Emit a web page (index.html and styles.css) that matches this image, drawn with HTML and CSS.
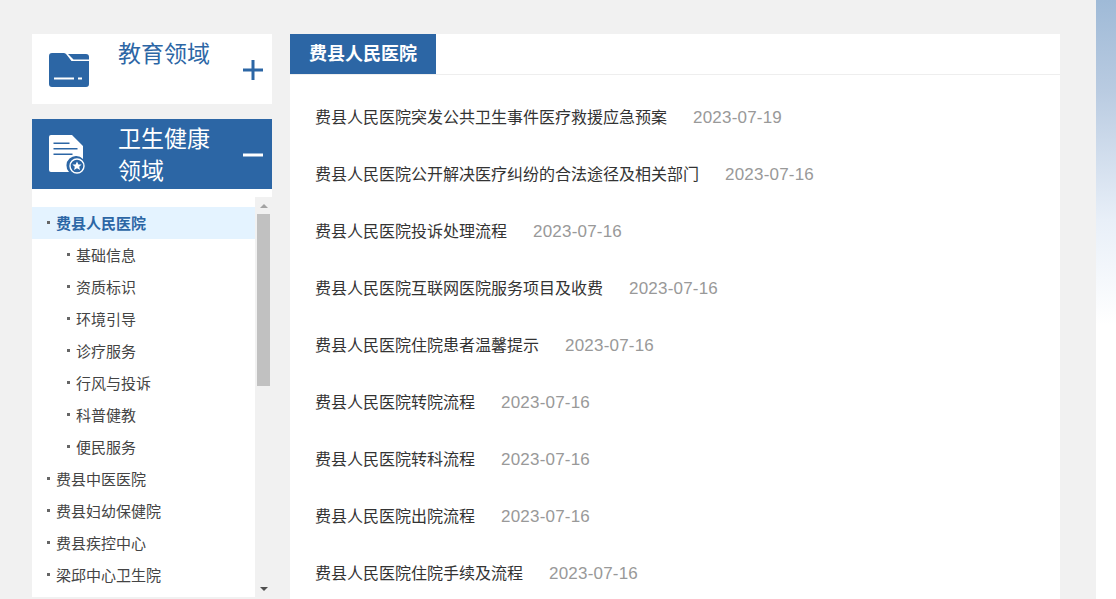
FILE: index.html
```html
<!DOCTYPE html>
<html lang="zh">
<head>
<meta charset="utf-8">
<title>费县人民医院</title>
<link rel="stylesheet" href="styles.css">
</head>
<body>
<div class="page">
  <div class="content">
    <aside class="side">
      <div class="domain">
        <svg class="domain-icon" width="40" height="34" viewBox="0 0 40 34"><path fill="#2c66a5" d="M3 0h12q1.500 0 2.500 1.500l5 6.500H40v23q0 3-3 3H3q-3 0-3-3V3q0-3 3-3z"/><path fill="#2c66a5" d="M19 1h18q3 0 3 3v2.500H24.500z"/><path fill="#fff" d="M5 24.500h20v2H5zM29 24.500h4v2h-4z"/></svg>
        <div class="domain-name">教育领域</div>
        <div class="toggle">
          <svg width="20" height="20" viewBox="0 0 20 20"><path fill="#2c66a5" d="M0 8.500h20v3H0zM8.500 0h3v20h-3z"/></svg>
        </div>
      </div>
      <div class="domain domain-on">
        <svg class="domain-icon" width="36" height="39" viewBox="0 0 36 39"><path fill="#fff" d="M2 0h21l11 11v13a9.500 9.500 0 0 0-14 13H2q-2 0-2-2V2q0-2 2-2z"/><path fill="#2c66a5" d="M4.500 7.500h16v1.500h-16zM4.500 13h24v1.500h-24zM4.500 18.500h19v1.500h-19z"/><circle cx="28" cy="31" r="7" fill="none" stroke="#fff" stroke-width="1.400"/><path fill="#fff" d="M28 26.500l1.400 3h3.200l-2.400 2.200.8 3.200-3-1.700-3 1.700.8-3.200-2.400-2.200h3.200z"/></svg>
        <div class="domain-name">卫生健康领域</div>
        <div class="toggle">
          <svg width="20" height="20" viewBox="0 0 20 20"><path fill="#fff" d="M0 8.500h20v3H0z"/></svg>
        </div>
      </div>
      <div class="tree-wrap">
        <ul class="tree">
          <li class="on">费县人民医院</li>
          <li class="sub">基础信息</li>
          <li class="sub">资质标识</li>
          <li class="sub">环境引导</li>
          <li class="sub">诊疗服务</li>
          <li class="sub">行风与投诉</li>
          <li class="sub">科普健教</li>
          <li class="sub">便民服务</li>
          <li>费县中医医院</li>
          <li>费县妇幼保健院</li>
          <li>费县疾控中心</li>
          <li>梁邱中心卫生院</li>
        </ul>
        <div class="bar">
          <span class="arrow-up"></span>
          <span class="thumb"></span>
          <span class="arrow-down"></span>
        </div>
      </div>
    </aside>
    <main class="main">
      <div class="tab-row"><h2 class="tab">费县人民医院</h2></div>
      <ul class="news">
        <li><a>费县人民医院突发公共卫生事件医疗救援应急预案</a><time>2023-07-19</time></li>
        <li><a>费县人民医院公开解决医疗纠纷的合法途径及相关部门</a><time>2023-07-16</time></li>
        <li><a>费县人民医院投诉处理流程</a><time>2023-07-16</time></li>
        <li><a>费县人民医院互联网医院服务项目及收费</a><time>2023-07-16</time></li>
        <li><a>费县人民医院住院患者温馨提示</a><time>2023-07-16</time></li>
        <li><a>费县人民医院转院流程</a><time>2023-07-16</time></li>
        <li><a>费县人民医院转科流程</a><time>2023-07-16</time></li>
        <li><a>费县人民医院出院流程</a><time>2023-07-16</time></li>
        <li><a>费县人民医院住院手续及流程</a><time>2023-07-16</time></li>
      </ul>
    </main>
  </div>
  <div class="strip"></div>
</div>
</body>
</html>
```

FILE: styles.css
```css
* { box-sizing: border-box; }
html, body { margin: 0; height: 599px; overflow: hidden; }
body {
  background: #f1f1f1;
  font-family: "Liberation Sans", "Noto Sans CJK SC", sans-serif;
  color: #333;
}
ul { list-style: none; margin: 0; padding: 0; }
.page { display: flex; height: 599px; overflow: hidden; }
.content {
  width: 1096px;
  padding: 34px 36px 0 32px;
  display: flex;
  gap: 18px;
  align-items: flex-start;
}
.strip {
  flex: 1;
  height: 100%;
  background: linear-gradient(#9fbad7 0, #b9cbe1 90px, #e8eff8 220px, #fff 325px);
}
.side { width: 240px; flex: none; }
.domain {
  height: 70px;
  background: #fff;
  display: flex;
  margin-bottom: 15px;
  color: #2c66a5;
}
.domain-icon { flex: none; margin: 19px 0 0 17px; }
.domain-name {
  width: 96px;
  margin: 4px 0 0 29px;
  font-size: 23px;
  line-height: 32px;
}
.toggle { margin: 26px 0 0 29px; line-height: 0; }
.domain-on { background: #2c66a5; color: #fff; margin-bottom: 0; }
.domain-on .domain-icon { margin: 16px 0 0 17px; }
.domain-on .domain-name { margin-left: 33px; }
.tree-wrap {
  height: 408px;
  padding-top: 8px;
  background: #fff;
  display: flex;
  overflow: hidden;
}
.tree { width: 223px; flex: none; padding-top: 10px; }
.tree li {
  height: 32px;
  line-height: 34px;
  font-size: 15px;
  padding-left: 24px;
  position: relative;
  color: #444;
}
.tree li::before {
  content: "";
  position: absolute;
  left: 15px;
  top: 14px;
  width: 3px;
  height: 3px;
  background: #666;
}
.tree .sub { padding-left: 44px; }
.tree .sub::before { left: 35px; }
.tree .on { background: #e4f3ff; color: #2c66a5; font-weight: 700; }
.bar {
  width: 17px;
  flex: none;
  background: #f1f1f1;
  display: flex;
  flex-direction: column;
  align-items: center;
  height: 100%;
}
.arrow-up {
  margin-top: 7px;
  border: 4px solid transparent;
  border-top: 0;
  border-bottom: 4px solid #a3a3a3;
}
.thumb {
  width: 13px;
  height: 172px;
  margin-top: 6px;
  background: #c1c1c1;
}
.arrow-down {
  margin-top: auto;
  margin-bottom: 6px;
  border: 4px solid transparent;
  border-bottom: 0;
  border-top: 4px solid #505050;
}
.main { width: 770px; flex: none; background: #fff; height: 565px; }
.tab-row { height: 41px; border-bottom: 1px solid #eee; }
.tab {
  margin: 0;
  width: 146px;
  height: 40px;
  line-height: 40px;
  text-align: center;
  background: #2c66a5;
  color: #fff;
  font-size: 18px;
  font-weight: 700;
}
.news { padding: 14px 0 0 25px; }
.news li {
  height: 57px;
  line-height: 57px;
  font-size: 16px;
  white-space: nowrap;
}
.news time { margin-left: 26px; color: #999; font-size: 17px; letter-spacing: 0.2px; }
```
